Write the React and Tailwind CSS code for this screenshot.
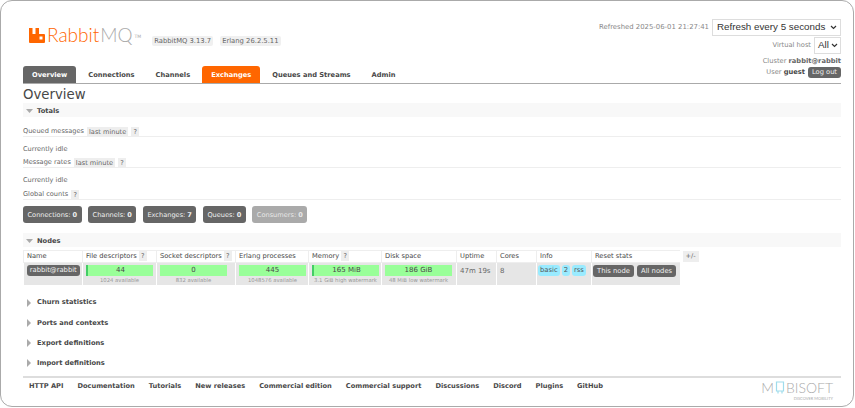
import React from "react";

const Help = () => <span className="inline-block shrink-0 bg-[#eeeeee] w-[8px] text-center leading-[10px] text-[#666] text-[6.6px]">?</span>;
const Tag = ({ children }) => <span className="inline-block bg-[#eeeeee] px-[2px] leading-[10px] text-[#666]">{children}</span>;
const Tri = ({ open }) => open
  ? <svg width="7" height="6" viewBox="0 0 7 6" className="shrink-0"><path d="M0 1h7L3.5 5z" fill="#aaa" /></svg>
  : <svg width="5" height="8" viewBox="0 0 5 8" className="shrink-0"><path d="M0 0l4 4-4 4z" fill="#aaa" /></svg>;

const Section = ({ open, title, className }) => (
  <div className={"flex items-center h-[14px] pt-[2px] pl-[3px] gap-[4px] font-bold text-[#484848] text-[6.7px] " + (open ? "bg-[#f8f8f8] " : "") + (className || "")}>
    <div className="w-[7px] flex justify-center"><Tri open={open} /></div>
    <span>{title}</span>
  </div>
);

const Row = ({ children }) => (
  <div className="flex items-center gap-[3px] h-[12px] pt-[2px] border-b border-[#eeeeee] text-[#666] text-[6.6px]">{children}</div>
);

const Count = ({ label, value, muted }) => (
  <div className={"flex items-center h-[17px] pt-[2px] px-[4.5px] rounded-[3px] text-[6.6px] gap-[2px] " + (muted ? "bg-[#aaaaaa] text-[#e8e8e8]" : "bg-[#666666] text-[#f0f0f0]")}>
    <span>{label}:</span><b>{value}</b>
  </div>
);

const Bar = ({ value, sub, fill }) => (
  <td className="border-l border-white pl-[3px] pt-[2px] align-top text-center">
    <div className="w-[67px]">
      <div className="flex h-[11px] bg-[#99ff99] text-[7px] text-[#484848] leading-[11px]">
        {fill ? <div className="h-full bg-[#44cc66] shrink-0 w-[2px]" /> : null}
        <span className="flex-1 text-center">{value}</span>
      </div>
      <div className="text-[5.3px] text-[#999] leading-[8px] whitespace-nowrap">{sub}</div>
    </div>
  </td>
);

const Th = ({ children, help, className }) => (
  <th className={"border-l border-b border-t border-[#eeeeee] bg-white font-normal text-left pl-[3px] text-[6.7px] text-[#484848] h-[12px] whitespace-nowrap " + className}>
    <div className="flex items-center gap-[2px]"><span>{children}</span>{help ? <Help /> : null}</div>
  </th>
);

const Pill = ({ children }) => <span className="bg-[#666666] text-[#f0f0f0] rounded-[3px] px-[4px] h-[12px] leading-[12px] text-[6.8px] whitespace-nowrap">{children}</span>;
const Blue = ({ children }) => <span className="bg-[#99ebff] text-[#555] rounded-[3px] px-[2px] h-[11px] leading-[11px] text-[6.8px]">{children}</span>;

const tabs = [
  ["Overview", "bg-[#666666] text-white"],
  ["Connections", "text-[#484848]"],
  ["Channels", "text-[#484848]"],
  ["Exchanges", "bg-[#ff6600] text-white"],
  ["Queues and Streams", "text-[#484848]"],
  ["Admin", "text-[#484848]"],
];
const links = ["HTTP API", "Documentation", "Tutorials", "New releases", "Commercial edition", "Commercial support", "Discussions", "Discord", "Plugins", "GitHub"];
const closed = ["Churn statistics", "Ports and contexts", "Export definitions", "Import definitions"];

const Chevron = () => <svg width="7" height="5" viewBox="0 0 7 5" className="shrink-0"><path d="M1 1l2.5 2.5L6 1" fill="none" stroke="#333" strokeWidth="1.2" /></svg>;

export default function App() {
  return (
    <div className="w-[855px] h-[408px] bg-white overflow-hidden">
      <div className="h-[407px] w-[854px] border border-[#aaaaaa] rounded-[12px] pl-[22px] pr-[12px] pt-[11px] font-['DejaVu_Sans',sans-serif] text-[#666]">
        <header className="flex justify-between h-[54px] pt-[9px]">
          <div className="flex items-end h-[26px] pl-[6px]">
            <svg width="16" height="15" viewBox="0 0 16 15" className="mb-[4px]"><path fillRule="evenodd" d="M0 0h3.5v6h3V0H10v6h5a1 1 0 0 1 1 1v7a1 1 0 0 1-1 1H1a1 1 0 0 1-1-1z M10.5 8.500v3h3v-3z" fill="#ff6600" /></svg>
            <span className="font-['Lato',sans-serif] font-light text-[19px] leading-[25px] text-[#ff6600] ml-[2px]">Rabbit</span>
            <span className="font-['Lato',sans-serif] font-light text-[19px] leading-[25px] text-[#aaaaaa] ml-[1px]">MQ</span>
            <span className="text-[4.5px] text-[#aaa] mb-[6px] ml-[2px]">TM</span>
            <span className="bg-[#f0f0f0] text-[#666] text-[6.8px] leading-[10px] px-[2px] mb-[1px] ml-[11px] rounded-[2px]">RabbitMQ 3.13.7</span>
            <span className="bg-[#f0f0f0] text-[#666] text-[6.8px] leading-[10px] px-[2px] mb-[1px] ml-[7px] rounded-[2px]">Erlang 26.2.5.11</span>
          </div>
          <div className="flex flex-col items-end -mt-[2px] text-[6.7px] text-[#888]">
            <div className="flex items-center gap-[3px] h-[17px]">
              <span className="text-[6.9px]">Refreshed 2025-06-01 21:27:41</span>
              <div className="flex items-center justify-between w-[129px] h-[17px] border border-[#ddd] pl-[4px] pr-[3px] font-['Liberation_Sans',sans-serif] text-[9.8px] text-[#333] whitespace-nowrap">
                <span>Refresh every 5 seconds</span>
                <Chevron />
              </div>
            </div>
            <div className="flex items-center gap-[3px] h-[17px] mt-[1px]">
              <span>Virtual host</span>
              <div className="flex items-center justify-between w-[27px] h-[17px] border border-[#ddd] pl-[3px] pr-[2px] font-['Liberation_Sans',sans-serif] text-[9.8px] text-[#333]">
                <span>All</span>
                <Chevron />
              </div>
            </div>
            <div className="h-[12px] leading-[13px] mt-[1px]">Cluster <b className="text-[#666]">rabbit@rabbit</b></div>
            <div className="flex items-center gap-[3px] h-[11px]">
              <span>User <b className="text-[#484848]">guest</b></span>
              <span className="bg-[#666666] text-[#f0f0f0] rounded-[3px] px-[4px] leading-[11px]">Log out</span>
            </div>
          </div>
        </header>
        <nav className="flex gap-[3px] h-[18px] pt-[1px] border-b border-[#aaaaaa] text-[6.7px] font-bold">
          {tabs.map(([t, c]) => (
            <div key={t} className={"flex items-center justify-center px-[9px] rounded-t-[3px] -mt-[1px] pt-[1px] " + c}>{t}</div>
          ))}
        </nav>
        <h1 className="text-[13.3px] pt-[3px] leading-[16px] text-[#484848]">Overview</h1>
        <Section open title="Totals" />
        <div className="mt-[8px]">
          <Row><span>Queued messages</span><Tag>last minute</Tag><Help /></Row>
        </div>
        <div className="text-[6.6px] h-[13px] leading-[13px] mt-[6px]">Currently idle</div>
        <Row><span>Message rates</span><Tag>last minute</Tag><Help /></Row>
        <div className="text-[6.6px] h-[13px] leading-[13px] mt-[6px]">Currently idle</div>
        <div className="mt-[1px]">
          <Row><span>Global counts</span><Help /></Row>
        </div>
        <div className="flex gap-[6.5px] mt-[6px]">
          <Count label="Connections" value="0" />
          <Count label="Channels" value="0" />
          <Count label="Exchanges" value="7" />
          <Count label="Queues" value="0" />
          <Count label="Consumers" value="0" muted />
        </div>
        <Section open title="Nodes" className="mt-[10px]" />
        <div className="flex mt-[3px] items-start">
          <table className="border-collapse table-fixed w-[656px]">
            <thead>
              <tr>
                <Th className="w-[59px]">Name</Th>
                <Th className="w-[74px]" help>File descriptors</Th>
                <Th className="w-[79px]" help>Socket descriptors</Th>
                <Th className="w-[73px]">Erlang processes</Th>
                <Th className="w-[73px]" help>Memory</Th>
                <Th className="w-[75px]">Disk space</Th>
                <Th className="w-[40px]">Uptime</Th>
                <Th className="w-[40px]">Cores</Th>
                <Th className="w-[55px]">Info</Th>
                <Th className="w-[88px]">Reset stats</Th>
              </tr>
            </thead>
            <tbody>
              <tr className="bg-[#e6e6e6] h-[22px]">
                <td className="pl-[3px] pr-[2px] pt-[2px] align-top"><span className="block bg-[#666666] text-[#f0f0f0] rounded-[3px] h-[11px] leading-[11px] text-[6.8px] text-center">rabbit@rabbit</span></td>
                <Bar value="44" sub="1024 available" fill />
                <Bar value="0" sub="832 available" />
                <Bar value="445" sub="1048576 available" />
                <Bar value="165 MiB" sub="3.1 GiB high watermark" fill />
                <Bar value="186 GiB" sub="48 MiB low watermark" />
                <td className="border-l border-white pl-[3px] pt-[2px] align-top text-[7px] leading-[12px] whitespace-nowrap">47m 19s</td>
                <td className="border-l border-white pl-[3px] pt-[2px] align-top text-[7px] leading-[12px]">8</td>
                <td className="border-l border-white pl-[1px] pt-[2px] align-top"><div className="flex gap-[2px]"><Blue>basic</Blue><Blue>2</Blue><Blue>rss</Blue></div></td>
                <td className="border-l border-white pl-[1px] pt-[2px] align-top"><div className="flex gap-[3px]"><Pill>This node</Pill><Pill>All nodes</Pill></div></td>
              </tr>
            </tbody>
          </table>
          <span className="bg-[#eeeeee] ml-[3px] mt-[1px] h-[11px] leading-[11px] w-[16px] text-center text-[6.6px] text-[#666]">+/-</span>
        </div>
        <div className="mt-[10px] flex flex-col gap-[6.3px]">
          {closed.map((t) => <Section key={t} title={t} />)}
        </div>
        <footer className="flex items-start justify-between mt-[7px] border-t-2 border-[#dddddd] h-[28px]">
          <div className="flex gap-[14px] pl-[6px] pt-[2px] text-[6.65px] leading-[12px] font-bold text-[#484848]">
            {links.map((l) => <span key={l}>{l}</span>)}
          </div>
          <div className="flex flex-col items-end pr-[8px] pt-[3px] font-['Lato',sans-serif] text-[#aaaaaa]">
            <div className="flex items-center text-[14px] leading-[14px] font-light">
              <span>M</span>
              <svg width="10" height="14" viewBox="0 0 10 14" className="mx-[1px]"><path d="M1.500 1h7v9h-7z M3 10v2.500M7 10v2.500" fill="none" stroke="#9fdcec" strokeWidth="1.200" /></svg>
              <span>BISOFT</span>
            </div>
            <span className="text-[4px] leading-[7px]">DISCOVER MOBILITY</span>
          </div>
        </footer>
      </div>
    </div>
  );
}
